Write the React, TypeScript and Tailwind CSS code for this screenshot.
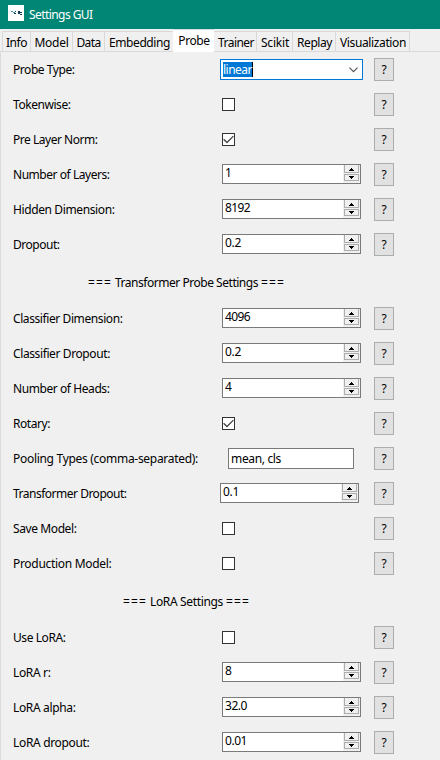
import { useLayoutEffect, useRef } from 'react';

/* Sets a run of text and tunes its tracking so it spans exactly `w` pixels. */
function Text({ w, children }: { w: number; children: string }) {
  const ref = useRef<HTMLSpanElement>(null);
  useLayoutEffect(() => {
    const el = ref.current;
    if (!el) return;
    el.style.letterSpacing = '0px';
    const natural = el.getBoundingClientRect().width;
    el.style.letterSpacing = `${(w - natural) / children.length}px`;
  }, [w, children]);
  return (
    <span ref={ref} className="inline-block whitespace-pre">
      {children}
    </span>
  );
}

type Control =
  | { kind: 'combo'; value: string; w: number }
  | { kind: 'check'; on: boolean }
  | { kind: 'spin'; value: string; w: number; wide?: boolean }
  | { kind: 'entry'; value: string; w: number };

type Row = { label: string; w: number; control: Control };

const probe: Row[] = [
  { label: 'Probe Type:', w: 61.5, control: { kind: 'combo', value: 'linear', w: 29 } },
  { label: 'Tokenwise:', w: 57.5, control: { kind: 'check', on: false } },
  { label: 'Pre Layer Norm:', w: 84.5, control: { kind: 'check', on: true } },
  { label: 'Number of Layers:', w: 96.5, control: { kind: 'spin', value: '1', w: 6 } },
  { label: 'Hidden Dimension:', w: 101.5, control: { kind: 'spin', value: '8192', w: 25 } },
  { label: 'Dropout:', w: 46.5, control: { kind: 'spin', value: '0.2', w: 16 } },
];

const transformer: Row[] = [
  { label: 'Classifier Dimension:', w: 109.5, control: { kind: 'spin', value: '4096', w: 25 } },
  { label: 'Classifier Dropout:', w: 97, control: { kind: 'spin', value: '0.2', w: 16 } },
  { label: 'Number of Heads:', w: 96.5, control: { kind: 'spin', value: '4', w: 6 } },
  { label: 'Rotary:', w: 37, control: { kind: 'check', on: true } },
  { label: 'Pooling Types (comma-separated):', w: 185, control: { kind: 'entry', value: 'mean, cls', w: 50 } },
  { label: 'Transformer Dropout:', w: 113.5, control: { kind: 'spin', value: '0.1', w: 16, wide: true } },
  { label: 'Save Model:', w: 63.5, control: { kind: 'check', on: false } },
  { label: 'Production Model:', w: 98.5, control: { kind: 'check', on: false } },
];

const lora: Row[] = [
  { label: 'Use LoRA:', w: 52.5, control: { kind: 'check', on: false } },
  { label: 'LoRA r:', w: 37.5, control: { kind: 'spin', value: '8', w: 6 } },
  { label: 'LoRA alpha:', w: 62.5, control: { kind: 'spin', value: '32.0', w: 22 } },
  { label: 'LoRA dropout:', w: 76.5, control: { kind: 'spin', value: '0.01', w: 22 } },
];

function Arrow({ down }: { down?: boolean }) {
  return (
    <svg width="5" height="3" viewBox="0 0 5 3" shapeRendering="crispEdges">
      <path d={down ? 'M0 0h5v1h-5zM1 1h3v1h-3zM2 2h1v1h-1z' : 'M2 0h1v1h-1zM1 1h3v1h-3zM0 2h5v1h-5z'} />
    </svg>
  );
}

function Field({ control }: { control: Control }) {
  if (control.kind === 'combo') {
    return (
      <div className="mt-[7px] flex h-[21px] w-[143px] items-center justify-between border border-[#0078d7] bg-white pr-[4px] pl-[2px]">
        <span className="flex h-[15px] items-center border-r border-black bg-[#0078d7] text-white">
          <Text w={control.w}>{control.value}</Text>
        </span>
        <svg width="9" height="6" viewBox="0 0 9 6" fill="none" stroke="#555" strokeWidth="1.2">
          <path d="M0.5 0.7L4.5 4.7L8.5 0.7" />
        </svg>
      </div>
    );
  }
  if (control.kind === 'check') {
    return (
      <div className="mt-[11px] ml-[2px] size-[13px] border border-[#333] bg-white">
        {control.on && (
          <svg width="11" height="11" viewBox="0 0 11 11" fill="none" stroke="#444" strokeWidth="1.3">
            <path d="M0.6 5.2L4 8.5L10.4 2.1" />
          </svg>
        )}
      </div>
    );
  }
  if (control.kind === 'entry') {
    return (
      <div className="mt-[7px] ml-[8px] flex h-[21px] w-[126px] items-center border border-[#7a7a7a] bg-white pl-[2px]">
        <Text w={control.w}>{control.value}</Text>
      </div>
    );
  }
  return (
    <div
      className={`mt-[7px] flex h-[20px] w-[139px] justify-between border border-[#7a7a7a] bg-white pl-[2px] ${control.wide ? '' : 'ml-[2px]'}`}
    >
      <span className="h-[16px] leading-[16px]">
        <Text w={control.w}>{control.value}</Text>
      </span>
      <div className="flex w-[17px] flex-col items-center gap-px bg-[#f0f0f0]">
        <div className="flex h-[8px] w-[15px] items-end justify-center border border-t-0 border-[#adadad] bg-[#f0f0f0] pb-px">
          <Arrow />
        </div>
        <div className="flex h-[7px] w-[15px] items-center justify-center border border-[#adadad] bg-[#f0f0f0]">
          <Arrow down />
        </div>
      </div>
    </div>
  );
}

function SettingRow({ row }: { row: Row }) {
  return (
    <div className="flex h-[35px]">
      <div className="w-[207px] leading-[36px]">
        <Text w={row.w}>{row.label}</Text>
      </div>
      <div className="w-[154px]">
        <Field control={row.control} />
      </div>
      <button className="mt-[6px] flex h-[23px] w-[20px] items-center justify-center border border-[#adadad] bg-[#e1e1e1]">
        ?
      </button>
    </div>
  );
}

function Heading({ w, pad, children }: { w: number; pad: string; children: string }) {
  return (
    <div className={`flex h-[39px] gap-[3px] leading-[41px] ${pad}`}>
      <Text w={24}>===</Text>
      <Text w={w}>{children}</Text>
      <Text w={24}>===</Text>
    </div>
  );
}

function Tab({ w, box, children }: { w: number; box: string; children: string }) {
  return (
    <div className={`flex h-[20px] items-center justify-center border-t border-r border-[#d9d9d9] pt-[2px] ${box}`}>
      <Text w={w}>{children}</Text>
    </div>
  );
}

export default function App() {
  return (
    <div className="h-[760px] w-[440px] overflow-hidden bg-[#f0f0f0] font-['Noto_Sans','Open_Sans',sans-serif] text-[12px] text-black">
      <header className="flex h-[29px] items-center gap-[5px] bg-[#018574] pl-[8px] text-white">
        <svg width="16" height="16" viewBox="0 0 16 16" className="-mt-[3px]" shapeRendering="crispEdges">
          <path d="M0 0h16v16H0z" fill="#fff" />
          <path d="M3 6h2v1H3zM5 7h2v1H5z" fill="#3f8ca3" />
          <path d="M7 6h1v1H7zM6 8h2v1H6zM10 6h2v3h-2zM12 7h2v1h-2zM12 9h2v1h-2z" fill="#123a56" />
        </svg>
        <Text w={63.5}>Settings GUI</Text>
      </header>
      <nav className="flex h-[23px] items-end">
        <div className="flex h-[21px] w-[173px] border-b border-[#d9d9d9] pl-[2px]">
          <Tab w={21} box="w-[29px] border-l">Info</Tab>
          <Tab w={34} box="w-[42px]">Model</Tab>
          <Tab w={24} box="w-[32px]">Data</Tab>
          <Tab w={61} box="w-[68px] border-r-0 pl-px">Embedding</Tab>
        </div>
        <div className="flex h-[23px] w-[41px] justify-center border-t border-[#d9d9d9] bg-white pl-px leading-[22px]">
          <Text w={31.5}>Probe</Text>
        </div>
        <div className="flex h-[21px] w-[226px] border-b border-[#d9d9d9]">
          <Tab w={36} box="w-[43px] pl-[2px]">Trainer</Tab>
          <Tab w={28} box="w-[36px] pl-px">Scikit</Tab>
          <Tab w={35} box="w-[43px] pl-px">Replay</Tab>
          <Tab w={66} box="w-[74px] pl-px">Visualization</Tab>
        </div>
      </nav>
      <main className="h-[708px] border-l border-[#dcdcdc] pl-[12px]">
        {probe.map((row) => (
          <SettingRow key={row.label} row={row} />
        ))}
        <Heading w={143} pad="pl-[75px]">Transformer Probe Settings</Heading>
        {transformer.map((row) => (
          <SettingRow key={row.label} row={row} />
        ))}
        <Heading w={73} pad="pl-[110px]">LoRA Settings</Heading>
        {lora.map((row) => (
          <SettingRow key={row.label} row={row} />
        ))}
      </main>
    </div>
  );
}
